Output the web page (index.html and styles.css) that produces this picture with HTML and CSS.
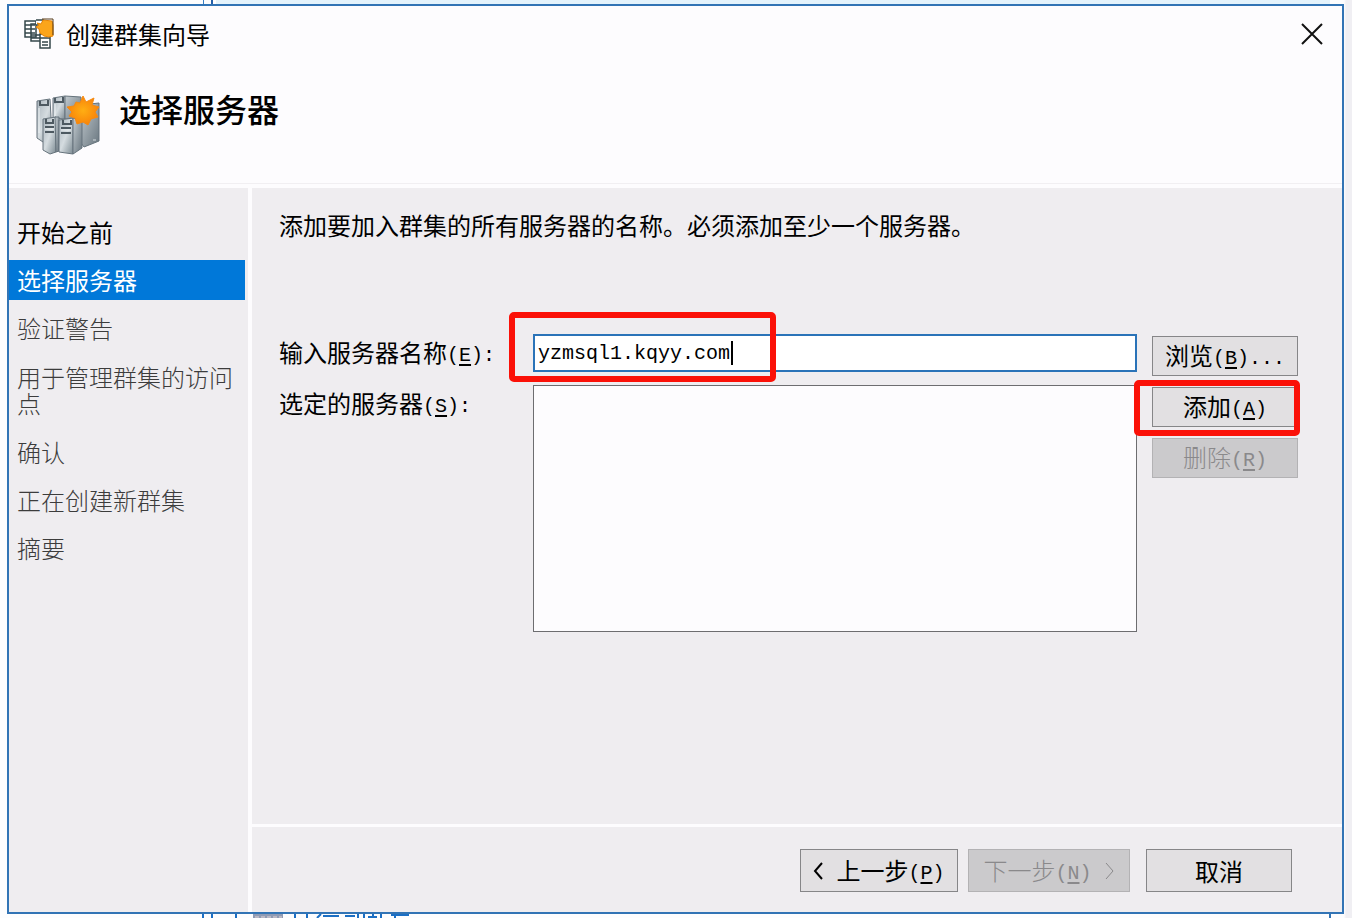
FILE: index.html
```html
<!DOCTYPE html>
<html lang="zh-CN">
<head>
<meta charset="utf-8">
<meta name="viewport" content="width=device-width, initial-scale=1">
<title>创建群集向导</title>
<link rel="stylesheet" href="styles.css">
</head>
<body>
<svg class="backdrop backdrop-top" viewBox="0 0 1152 6" width="1152" height="6" aria-hidden="true">
  <path d="M16 0H1130V6H16z" fill="#e4f3fc"/><path d="M3.500 0V6" stroke="#3a7fc4"/><path d="M12 0V6" stroke="#245fa8" stroke-width="2"/>
</svg>
<svg class="backdrop backdrop-bottom" width="230" height="5" viewBox="0 0 230 5" aria-hidden="true">
  <g fill="none" stroke="#1c6fc4" stroke-width="2">
    <path d="M8 0V5M17 0V5M41 0V5M100 0V5M112 0V5M122 5l4-4M128 3h16M150 3h10M163 0V5M169 0V5M173 4h9M178 0V5M186 0V5M196 2h18M200 0V5"/>
  </g>
  <path d="M58 1H88V5H58z" fill="#8f9bb4"/><path d="M60 4H87" stroke="#e4d5d5" stroke-dasharray="4 2"/>
</svg>
<svg class="backdrop backdrop-corner" width="4" height="5" viewBox="0 0 4 5" aria-hidden="true"><path d="M2 0V5" stroke="#3274b5" stroke-width="2"/></svg>
<main class="window">
  <header class="header">
    <div class="titlebar">
      <svg class="title-icon" width="32" height="32" viewBox="0 0 32 32" aria-hidden="true">
        <g fill="#fff" stroke="#35474b" stroke-width="1.500">
          <path d="M2 3h11v16H2zM8 6h10v17H8z"/>
          <path d="M2 7h10M2 11h10M2 15h10M8 17h11M8 20h10"/>
          <path d="M17 16h10v14H17z"/>
          <path d="M17 20h10M19 24h6M19 27h6"/>
          <path d="M13 2h7v5h-7"/>
        </g>
        <path d="M14 5l4 1 2-4 9 1 1 4v11l-4 1-5-1-4-3-1-4-3-2 3-2z" fill="#fba51b" stroke="#e78405"/>
        <path d="M19 1h11v16" fill="none" stroke="#573b18"/>
      </svg>
      <h1 class="title">创建群集向导</h1>
      <button class="close" type="button" aria-label="关闭">
        <svg width="22" height="22" viewBox="0 0 22 22" aria-hidden="true"><path d="M1 1L21 21M21 1L1 21" stroke="#111" stroke-width="2"/></svg>
      </button>
    </div>
    <div class="heading">
      <svg width="66" height="62" viewBox="0 0 66 62" aria-hidden="true">
        <defs>
          <linearGradient id="front" x1="0" y1="0" x2="1" y2="1"><stop offset="0" stop-color="#a9b4bc"/><stop offset=".5" stop-color="#d5dce0"/><stop offset="1" stop-color="#7d8b93"/></linearGradient>
          <linearGradient id="side" x1="0" y1="0" x2="1" y2="1"><stop offset="0" stop-color="#c3cbd0"/><stop offset="1" stop-color="#69767f"/></linearGradient>
          <radialGradient id="star"><stop offset="0" stop-color="#ffae13"/><stop offset="1" stop-color="#f98409"/></radialGradient>
        </defs>
        <g stroke="#66737c">
          <path d="M2 7l13-2 2 36-9 7-6-4z" fill="url(#front)"/>
          <path d="M18 4l12-2v23l-12-1z" fill="url(#front)"/>
          <path d="M30 2l16 1v23l-16-1z" fill="url(#side)"/>
          <path d="M46 11l18-2v38l-15 6-3-4z" fill="url(#side)"/>
          <path d="M8 25l13-2v35l-6 2-7-4z" fill="url(#front)"/>
          <path d="M20 23h4v34l-3 1z" fill="url(#side)"/>
          <path d="M24 26l14-2v36l-14-2z" fill="url(#front)"/>
          <path d="M38 24l9 2v28l-9 6z" fill="url(#side)"/>
        </g>
        <path d="M5 7v4h8V6M20 4v4h8V3M11 25v4h7v-4M28 26v4h8v-4M10 33h9M10 38h9M26 34h10M26 39h10" fill="none" stroke="#4d5961" stroke-width="2"/>
        <path d="M10 35h9M26 36h10M4 14v25M20 10v12" fill="none" stroke="#eef2f4"/>
        <path d="M58 46h3" stroke="#d5dce0"/>
        <path d="M48 2l3 6 8-4-2 7 7 2-4 5 3 5-7 2-3 6-5-3-6 2-2-6-6-2 3-4-5-5 7-1 2-4 4 1z" fill="url(#star)" stroke="#f58a12"/>
      </svg>
      <h2 class="heading-text">选择服务器</h2>
    </div>
  </header>
  <div class="content">
    <nav class="steps" aria-label="步骤">
      <div class="step step-done">开始之前</div>
      <div class="step step-current" aria-current="step">选择服务器</div>
      <div class="step">验证警告</div>
      <div class="step step-wrapped">用于管理群集的访问点</div>
      <div class="step">确认</div>
      <div class="step">正在创建新群集</div>
      <div class="step">摘要</div>
    </nav>
    <form class="page">
      <div class="page-body">
        <p class="intro">添加要加入群集的所有服务器的名称。必须添加至少一个服务器。</p>
        <div class="fields">
          <label class="label" for="server">输入服务器名称<span class="latin">(<u>E</u>):</span></label>
          <div class="input-wrap">
            <input class="input" id="server" type="text" value="yzmsql1.kqyy.com">
            <span class="caret"></span>
            <span class="mark mark-input"></span>
          </div>
          <label class="label" for="selected">选定的服务器<span class="latin">(<u>S</u>):</span></label>
          <select class="list" id="selected" multiple></select>
          <div class="actions">
            <button class="button" type="button">浏览<span class="latin">(<u>B</u>)...</span></button>
            <div class="action-wrap">
              <button class="button" type="button">添加<span class="latin">(<u>A</u>)</span></button>
              <span class="mark mark-add"></span>
            </div>
            <button class="button" type="button" disabled>删除<span class="latin">(<u>R</u>)</span></button>
          </div>
        </div>
      </div>
      <footer class="footer">
        <button class="button button-back" type="button"><svg width="10" height="18" viewBox="0 0 10 18" aria-hidden="true"><path d="M9 1L2 9l7 8" fill="none" stroke="currentColor" stroke-width="2"/></svg><span>上一步<span class="latin">(<u>P</u>)</span></span></button>
        <button class="button button-next" type="button" disabled><span>下一步<span class="latin">(<u>N</u>)</span></span><svg width="10" height="18" viewBox="0 0 10 18" aria-hidden="true"><path d="M1 1l7 8-7 8" fill="none" stroke="currentColor"/></svg></button>
        <button class="button button-cancel" type="button">取消</button>
      </footer>
    </form>
  </div>
</main>
</body>
</html>
```
FILE: styles.css
```css
* { box-sizing: border-box; }

body {
  margin: 0;
  min-height: 100vh;
  display: flex;
  position: relative;
  padding: 4px 8px 4px 7px;
  background: linear-gradient(to left, #f0eff3 6px, #fdfdfe 8px);
  color: #000;
  font: 24px/24px "Noto Sans CJK SC", sans-serif;
}

h1, h2, p { margin: 0; }

.backdrop { position: absolute; }
.backdrop-top { top: 0; left: 200px; }
.backdrop-bottom { bottom: 0; left: 195px; }
.backdrop-corner { bottom: 0; right: 20px; }

.window {
  position: relative;
  flex: 1;
  display: flex;
  flex-direction: column;
  border: 2px solid #3274b5;
  background: #fdfcfe;
}

.header {
  padding-bottom: 27px;
  border-bottom: 1px solid #f1eff2;
}

.titlebar {
  display: flex;
  align-items: center;
  height: 56px;
  padding: 0 19px 0 14px;
}
.title-icon { margin-right: 11px; }
.title { flex: 1; font-size: 24px; font-weight: 400; }
.close {
  display: flex;
  padding: 0;
  border: 0;
  background: none;
}

.heading {
  display: flex;
  align-items: flex-start;
  gap: 18px;
  padding: 32px 26px 0;
}
.heading-text { font-size: 32px; line-height: 28px; font-weight: 500; }

.content {
  flex: 1;
  display: flex;
  gap: 4px;
  margin-top: 4px;
}

.steps {
  width: 239px;
  display: flex;
  flex-direction: column;
  gap: 8px;
  padding: 24px 3px 0 0;
  background: #efedf0;
}
.step { padding: 8px; color: #3c3c3c; font-weight: 300; }
.step-done { color: #000; font-weight: 400; }
.step-current { background: #0078d9; color: #fff; font-weight: 400; }
.step-wrapped { line-height: 26px; }

.page {
  flex: 1;
  display: flex;
  flex-direction: column;
  gap: 3px;
}
.page-body {
  flex: 1;
  padding: 25px 44px 24px 27px;
  background: #efedf0;
}

.fields {
  display: grid;
  grid-template-columns: 239px 1fr 146px;
  column-gap: 15px;
  row-gap: 13px;
  margin-top: 97px;
}
.label { line-height: 36px; }

.latin {
  font-family: "Liberation Mono", monospace;
  font-size: 20px;
  line-height: 20px;
  vertical-align: 1px;
}
.latin u { text-underline-offset: 3px; }

.input-wrap { position: relative; grid-column: 2; }
.input {
  display: block;
  width: 100%;
  height: 38px;
  padding: 0 3px;
  border: 2px solid #2a73b8;
  background: #fff;
  color: #000;
  font: 20px/24px "Liberation Mono", monospace;
  outline: 0;
}
.caret {
  position: absolute;
  top: 7px;
  left: 198px;
  width: 2px;
  height: 24px;
  background: #000;
}

.list {
  width: 100%;
  height: 247px;
  border: 1px solid #6d6d70;
  border-radius: 0;
  background: #fdfcfe;
}

.actions {
  grid-column: 3;
  grid-row: 1 / 3;
  display: flex;
  flex-direction: column;
  gap: 11px;
  padding-top: 2px;
}
.action-wrap { position: relative; display: flex; }

.button {
  flex: none;
  width: 100%;
  height: 40px;
  padding: 0;
  border: 1px solid #868688;
  background: #e2e0e2;
  color: #000;
  font: 24px/24px "Noto Sans CJK SC", sans-serif;
}
.button:disabled {
  border-color: #b3b2b4;
  background: #cbcacc;
  color: #8a898b;
  font-weight: 300;
}

.mark {
  position: absolute;
  border: 6px solid #fb1108;
  border-radius: 5px;
  pointer-events: none;
}
.mark-input { top: -22px; left: -24px; width: 267px; height: 70px; }
.mark-add { top: -7px; right: -2px; bottom: -9px; left: -18px; }

.footer {
  display: flex;
  justify-content: flex-end;
  gap: 10px;
  padding: 22px 50px 20px;
  background: #efedf0;
}
.footer .button {
  display: flex;
  align-items: center;
  justify-content: center;
  gap: 13px;
  height: 43px;
}
.footer .button-back { width: 158px; }
.footer .button-next { width: 162px; }
.footer .button-cancel { width: 146px; margin-left: 6px; }
```
